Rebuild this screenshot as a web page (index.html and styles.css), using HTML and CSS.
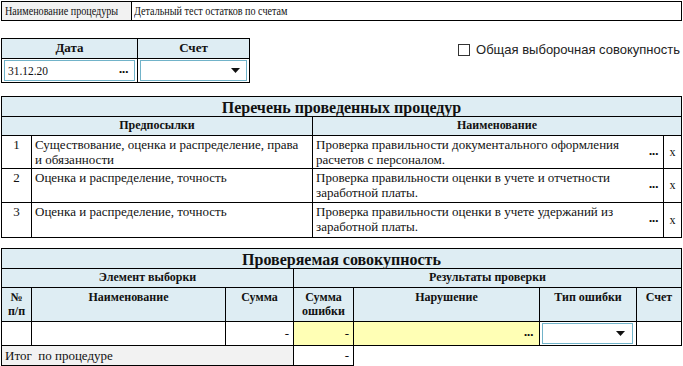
FILE: index.html
```html
<!DOCTYPE html>
<html lang="ru">
<head>
<meta charset="utf-8">
<title>Процедура</title>
<link rel="stylesheet" href="styles.css">
</head>
<body>
<div class="page">
  <table class="topbar">
    <colgroup><col class="c-label"><col></colgroup>
    <tr>
      <td class="label"><span class="narrow">Наименование процедуры</span></td>
      <td class="value"><span class="narrow">Детальный тест остатков по счетам</span></td>
    </tr>
  </table>

  <div class="filters">
    <table class="datebox">
      <colgroup><col class="c-date"><col class="c-acc"></colgroup>
      <tr class="hdr"><th>Дата</th><th>Счет</th></tr>
      <tr class="inputs">
        <td><div class="field"><span class="datetext">31.12.20</span><span class="dots">...</span></div></td>
        <td><div class="field"><span></span><svg class="arrow" width="9" height="5" viewBox="0 0 9 5"><path d="M0 0h9L4.5 5z" fill="#111"/></svg></div></td>
      </tr>
    </table>
    <label class="check"><span class="box"></span><span>Общая выборочная совокупность</span></label>
  </div>

  <table class="grid proc">
    <colgroup><col class="p1"><col class="p2"><col class="p3"><col class="p4"></colgroup>
    <tr class="title"><th colspan="4">Перечень проведенных процедур</th></tr>
    <tr class="hdr"><th colspan="2">Предпосылки</th><th colspan="2">Наименование</th></tr>
    <tr class="item r1">
      <td class="num">1</td>
      <td class="prem">Существование, оценка и распределение, права и обязанности</td>
      <td><div class="namecell"><span>Проверка правильности документального оформления расчетов с персоналом.</span><span class="dots">...</span></div></td>
      <td class="x">x</td>
    </tr>
    <tr class="item r2">
      <td class="num">2</td>
      <td class="prem">Оценка и распределение, точность</td>
      <td><div class="namecell"><span>Проверка правильности оценки в учете и отчетности заработной платы.</span><span class="dots">...</span></div></td>
      <td class="x">x</td>
    </tr>
    <tr class="item r3">
      <td class="num">3</td>
      <td class="prem">Оценка и распределение, точность</td>
      <td><div class="namecell"><span>Проверка правильности оценки в учете удержаний из заработной платы.</span><span class="dots">...</span></div></td>
      <td class="x">x</td>
    </tr>
  </table>

  <table class="grid sample">
    <colgroup><col class="s1"><col class="s2"><col class="s3"><col class="s4"><col class="s5"><col class="s6"><col class="s7"></colgroup>
    <tr class="title"><th colspan="7">Проверяемая совокупность</th></tr>
    <tr class="hdr"><th colspan="3">Элемент выборки</th><th colspan="4">Результаты проверки</th></tr>
    <tr class="hdr tall">
      <th>№<br>п/п</th><th>Наименование</th><th>Сумма</th><th>Сумма<br>ошибки</th><th>Нарушение</th><th>Тип ошибки</th><th>Счет</th>
    </tr>
    <tr class="data">
      <td></td>
      <td></td>
      <td class="amt">-</td>
      <td class="amt yellow">-</td>
      <td class="yellow"><div class="rightdots"><span class="dots">...</span></div></td>
      <td class="selcell"><div class="field"><span></span><svg class="arrow" width="9" height="5" viewBox="0 0 9 5"><path d="M0 0h9L4.5 5z" fill="#111"/></svg></div></td>
      <td></td>
    </tr>
    <tr class="total">
      <td colspan="3" class="totlabel">Итог&nbsp; по процедуре</td>
      <td class="amt">-</td>
      <td class="blank"></td>
      <td class="blank"></td>
      <td class="blank"></td>
    </tr>
  </table>
</div>
</body>
</html>
```

FILE: styles.css
```css
html, body {
  margin: 0;
  padding: 0;
  background: #ffffff;
}

body {
  font-family: "Liberation Serif", "Times New Roman", serif;
  font-size: 13px;
  color: #111;
}

.page {
  padding: 1px 1px 0 1px;
  width: 681px;
}

table {
  border-collapse: collapse;
  table-layout: fixed;
  font-family: "Liberation Serif", "Times New Roman", serif;
  font-size: 13px;
}

td, th {
  border: 1px solid #000;
  padding: 0;
}

/* top bar */
.topbar {
  width: 681px;
}
.topbar .c-label { width: 130px; }
.topbar tr { height: 19px; }
.topbar td {
  padding: 0 3px;
  line-height: 16px;
  white-space: nowrap;
}
.narrow {
  display: inline-block;
  transform: scaleX(0.78);
  transform-origin: left center;
}
.topbar .label {
  background: #f2f2f2;
}
.topbar .value {
  padding-left: 2px;
}

/* filters */
.filters {
  display: flex;
  justify-content: space-between;
  align-items: flex-start;
  margin-top: 17px;
}
.datebox {
  width: 249px;
}
.datebox .c-date { width: 136px; }
.datebox .hdr { height: 20px; }
.datebox .hdr th {
  font-size: 13px;
  padding-top: 1px;
  line-height: 16px;
}
.hdr th {
  background: #deedf3;
  font-size: 12px;
  font-weight: bold;
  text-align: center;
  vertical-align: top;
  padding-top: 1px;
  line-height: 14px;
}
.datebox .inputs td {
  padding: 1px 2px 1px 2px;
}
.field {
  height: 19px;
  border: 1px solid #71b3c9;
  display: flex;
  justify-content: space-between;
  align-items: center;
  padding: 0 6px 0 3px;
  line-height: 19px;
}
.datetext {
  display: inline-block;
  transform: scaleX(0.88);
  transform-origin: left center;
}
.dots {
  font-family: "Liberation Sans", Arial, sans-serif;
  font-weight: bold;
  font-size: 13px;
  letter-spacing: -0.5px;
  line-height: 11px;
  padding-bottom: 4px;
}
.arrow {
  display: block;
}

.check {
  display: flex;
  align-items: center;
  gap: 6px;
  margin-top: 4px;
  margin-right: 2px;
  font-family: "Liberation Sans", Arial, sans-serif;
  font-size: 13px;
  color: #222;
  line-height: 16px;
}
.check .box {
  width: 10px;
  height: 10px;
  border: 1px solid #333;
  background: #fff;
  display: block;
}

/* grids */
.grid {
  width: 681px;
}
.proc {
  margin-top: 13px;
}
.proc .p1 { width: 30px; }
.proc .p2 { width: 281px; }
.proc .p3 { width: 351px; }

.title { height: 20px; }
.title th {
  background: #deedf3;
  font-size: 16px;
  font-weight: bold;
  text-align: center;
  line-height: 17px;
  padding: 1px 0 0 0;
}
.proc .hdr { height: 19px; }
.item.r1 { height: 33px; }
.item.r2 { height: 34px; }
.item.r3 { height: 35px; }
.item td {
  vertical-align: top;
  padding: 1px 3px 0 3px;
  line-height: 15px;
}
.item td.prem {
  padding-right: 9px;
}
.item td.num {
  text-align: center;
  padding-left: 0;
  padding-right: 0;
}
.item td.x {
  text-align: center;
  vertical-align: middle;
  padding: 0;
  font-size: 12px;
}
.namecell {
  display: flex;
  justify-content: space-between;
  align-items: center;
  gap: 8px;
}
.namecell .dots {
  margin-right: 2px;
}

.sample {
  margin-top: 10px;
}
.sample .s1 { width: 30px; }
.sample .s2 { width: 194px; }
.sample .s3 { width: 68px; }
.sample .s4 { width: 60px; }
.sample .s5 { width: 186px; }
.sample .s6 { width: 97px; }
.sample .hdr { height: 19px; }
.sample .tall { height: 34px; }
.sample .tall th {
  padding-top: 2px;
}
.data { height: 24px; }
.data td {
  padding: 0;
}
.amt {
  text-align: right;
  padding-right: 4px !important;
}
.yellow {
  background: #ffffb5;
}
.rightdots {
  display: flex;
  justify-content: flex-end;
  padding-right: 6px;
}
.selcell {
  padding: 1px 3px 1px 2px !important;
}
.selcell .field {
  height: 19px;
  padding-right: 7px;
}
.total { height: 20px; }
.total td {
  line-height: 17px;
}
.totlabel {
  background: #f2f2f2;
  padding-left: 3px !important;
}
.total td.blank {
  border: none;
}
```
